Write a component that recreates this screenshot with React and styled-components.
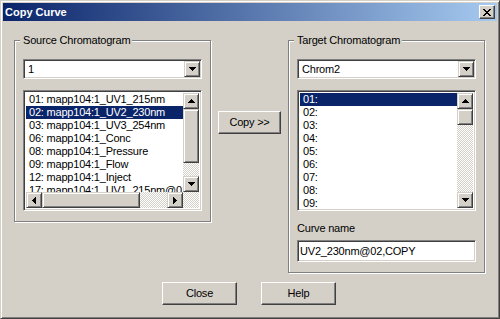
import React from 'react';
import styled, { createGlobalStyle } from 'styled-components';

// classic Windows 2000 palette
const FACE = '#D4D0C8';
const SHADOW = '#808080';
const DARK = '#404040';
const HILITE = '#FFFFFF';
const SELECT = '#0A246A';

const sourceCurves = [
  '01: mapp104:1_UV1_215nm',
  '02: mapp104:1_UV2_230nm',
  '03: mapp104:1_UV3_254nm',
  '06: mapp104:1_Conc',
  '08: mapp104:1_Pressure',
  '09: mapp104:1_Flow',
  '12: mapp104:1_Inject',
  '17: mapp104:1_UV1_215nm@01,COPY',
];

const targetSlots = ['01:', '02:', '03:', '04:', '05:', '06:', '07:', '08:', '09:'];

const arrowPaths = {
  down: 'M0 0h7v1H0zM1 1h5v1H1zM2 2h3v1H2zM3 3h1v1H3z',
  up: 'M3 0h1v1H3zM2 1h3v1H2zM1 2h5v1H1zM0 3h7v1H0z',
  left: 'M3 0h1v7H3zM2 1h1v5H2zM1 2h1v3H1zM0 3h1v1H0z',
  right: 'M0 0h1v7H0zM1 1h1v5H1zM2 2h1v3H2zM3 3h1v1H3z',
};

const Arrow = ({ dir }) => {
  const flat = dir === 'up' || dir === 'down';
  const w = flat ? 7 : 4;
  const h = flat ? 4 : 7;
  return (
    <svg width={w} height={h} viewBox={`0 0 ${w} ${h}`} shapeRendering="crispEdges">
      <path d={arrowPaths[dir]} fill="#000" />
    </svg>
  );
};

const CloseGlyph = () => (
  <svg width="8" height="7" viewBox="0 0 8 7" shapeRendering="crispEdges">
    <path
      d="M0 0h2v1H0zM6 0h2v1H6zM1 1h2v1H1zM5 1h2v1H5zM2 2h4v1H2zM3 3h2v1H3zM2 4h4v1H2zM1 5h2v1H1zM5 5h2v1H5zM0 6h2v1H0zM6 6h2v1H6z"
      fill="#000"
    />
  </svg>
);

const VScrollBar = ({ thumb }) => (
  <VScroll>
    <ScrollButton><Arrow dir="up" /></ScrollButton>
    <Thumb style={{ height: thumb }} />
    <Track />
    <ScrollButton><Arrow dir="down" /></ScrollButton>
  </VScroll>
);

const HScrollBar = ({ thumb }) => (
  <HScroll>
    <ScrollButton><Arrow dir="left" /></ScrollButton>
    <Thumb style={{ width: thumb }} />
    <Track />
    <ScrollButton><Arrow dir="right" /></ScrollButton>
  </HScroll>
);

const Combo = ({ value }) => (
  <ComboBox>
    <ComboText>{value}</ComboText>
    <ScrollButton><Arrow dir="down" /></ScrollButton>
  </ComboBox>
);

const App = () => {
  return (
    <>
      <GlobalStyle />
      <Window>
        <TitleBar>
          <TitleText>Copy Curve</TitleText>
          <CloseBox><CloseGlyph /></CloseBox>
        </TitleBar>

        <Content>
          <MainRow>
            <GroupBox>
              <GroupTitle>Source Chromatogram</GroupTitle>
              <Combo value="1" />
              <ListBox $hscroll>
                <Rows>
                  {sourceCurves.map((c, i) => (
                    <Row key={c} $selected={i === 1}>{c}</Row>
                  ))}
                </Rows>
                <VScrollBar thumb={54} />
                <HScrollBar thumb={98} />
                <Corner />
              </ListBox>
            </GroupBox>

            <Middle>
              <PushButton $width={63}>Copy &gt;&gt;</PushButton>
            </Middle>

            <GroupBox>
              <GroupTitle>Target Chromatogram</GroupTitle>
              <Combo value="Chrom2" />
              <ListBox>
                <Rows>
                  {targetSlots.map((s, i) => (
                    <Row key={s} $selected={i === 0}>{s}</Row>
                  ))}
                </Rows>
                <VScrollBar thumb={16} />
              </ListBox>
              <FieldLabel>Curve name</FieldLabel>
              <TextField readOnly value="UV2_230nm@02,COPY" />
            </GroupBox>
          </MainRow>

          <ButtonRow>
            <PushButton $width={75}>Close</PushButton>
            <PushButton $width={75}>Help</PushButton>
          </ButtonRow>
        </Content>
      </Window>
    </>
  );
};

const GlobalStyle = createGlobalStyle`
  html, body {
    margin: 0;
    padding: 0;
    background: ${FACE};
  }
  body {
    font-family: "Liberation Sans", Arial, sans-serif;
    font-size: 11px;
    letter-spacing: -0.2px;
    color: #000;
  }
`;

const Window = styled.div`
  width: 500px;
  height: 319px;
  box-sizing: border-box;
  display: flex;
  flex-direction: column;
  padding: 2px;
  background: ${FACE};
  border: 1px solid;
  border-color: ${FACE} ${DARK} ${DARK} ${FACE};
  box-shadow: inset 1px 1px ${HILITE}, inset -1px -1px ${SHADOW};
`;

const TitleBar = styled.div`
  height: 18px;
  display: flex;
  align-items: center;
  justify-content: space-between;
  padding: 0 2px 0 2px;
  background: linear-gradient(to right, ${SELECT}, #A6CAF0);
`;

const TitleText = styled.span`
  color: #fff;
  font-weight: bold;
  font-size: 11px;
  letter-spacing: 0;
  line-height: 13px;
  padding-top: 1px;
`;

const CloseBox = styled.div`
  width: 16px;
  height: 14px;
  box-sizing: border-box;
  display: flex;
  align-items: center;
  justify-content: center;
  background: ${FACE};
  border: 1px solid;
  border-color: ${HILITE} ${DARK} ${DARK} ${HILITE};
  box-shadow: inset -1px -1px ${SHADOW};
`;

const Content = styled.div`
  flex: 1;
  display: flex;
  flex-direction: column;
`;

const MainRow = styled.div`
  display: flex;
  align-items: flex-start;
  padding: 19px 0 0 11px;
`;

const GroupBox = styled.div`
  position: relative;
  width: 197px;
  box-sizing: border-box;
  display: flex;
  flex-direction: column;
  padding: 18px 8px 10px 8px;
  border: 1px solid ${SHADOW};
  box-shadow: inset 1px 1px ${HILITE}, 1px 1px ${HILITE};
`;

const GroupTitle = styled.span`
  position: absolute;
  top: -7px;
  left: 5px;
  padding: 0 2px 0 3px;
  line-height: 13px;
  background: ${FACE};
`;

const sunken = `
  border: 1px solid;
  border-color: ${SHADOW} ${HILITE} ${HILITE} ${SHADOW};
  box-shadow: inset 1px 1px ${DARK}, inset -1px -1px ${FACE};
  background: #fff;
  box-sizing: border-box;
`;

const ComboBox = styled.div`
  ${sunken}
  height: 20px;
  display: flex;
  align-items: center;
  padding: 1px;
`;

const ComboText = styled.span`
  flex: 1;
  padding-left: 3px;
  line-height: 13px;
`;

const ScrollButton = styled.div`
  width: 16px;
  height: 16px;
  flex: none;
  box-sizing: border-box;
  display: flex;
  align-items: center;
  justify-content: center;
  background: ${FACE};
  border: 1px solid;
  border-color: ${FACE} ${DARK} ${DARK} ${FACE};
  box-shadow: inset 1px 1px ${HILITE}, inset -1px -1px ${SHADOW};
`;

const Thumb = styled(ScrollButton)`
  width: 16px;
  height: 16px;
`;

const hatch = `
  background-color: #fff;
  background-image: repeating-conic-gradient(${FACE} 0 25%, #fff 0 50%);
  background-size: 2px 2px;
`;

const Track = styled.div`
  flex: 1;
  ${hatch}
`;

const ListBox = styled.div`
  ${sunken}
  margin-top: 11px;
  height: 121px;
  padding: 2px;
  display: grid;
  grid-template-columns: minmax(0, 1fr) 16px;
  grid-template-rows: ${(p) => (p.$hscroll ? 'minmax(0, 1fr) 16px' : 'minmax(0, 1fr)')};
  overflow: hidden;
`;

const Rows = styled.div`
  overflow: hidden;
`;

const Row = styled.div`
  height: 13px;
  line-height: 13px;
  padding-left: 3px;
  white-space: nowrap;
  background: ${(p) => (p.$selected ? SELECT : 'transparent')};
  color: ${(p) => (p.$selected ? '#fff' : '#000')};
`;

const VScroll = styled.div`
  display: flex;
  flex-direction: column;
`;

const HScroll = styled.div`
  display: flex;
`;

const Corner = styled.div`
  ${hatch}
`;

const Middle = styled.div`
  width: 77px;
  display: flex;
  justify-content: center;
  padding-top: 71px;
`;

const PushButton = styled.div`
  width: ${(p) => p.$width}px;
  height: 23px;
  box-sizing: border-box;
  display: flex;
  align-items: center;
  justify-content: center;
  line-height: 13px;
  background: ${FACE};
  border: 1px solid;
  border-color: ${HILITE} ${DARK} ${DARK} ${HILITE};
  box-shadow: inset -1px -1px ${SHADOW};
`;

const FieldLabel = styled.div`
  margin-top: 11px;
  line-height: 13px;
`;

const TextField = styled.input`
  ${sunken}
  margin: 5px 0 0 0;
  height: 22px;
  width: 100%;
  padding: 0 0 0 2px;
  font: inherit;
  letter-spacing: inherit;
  line-height: 13px;
  color: #000;
  outline: none;
`;

const ButtonRow = styled.div`
  display: flex;
  justify-content: center;
  gap: 24px;
  margin-top: 9px;
  padding-right: 2px;
`;

export default App;
